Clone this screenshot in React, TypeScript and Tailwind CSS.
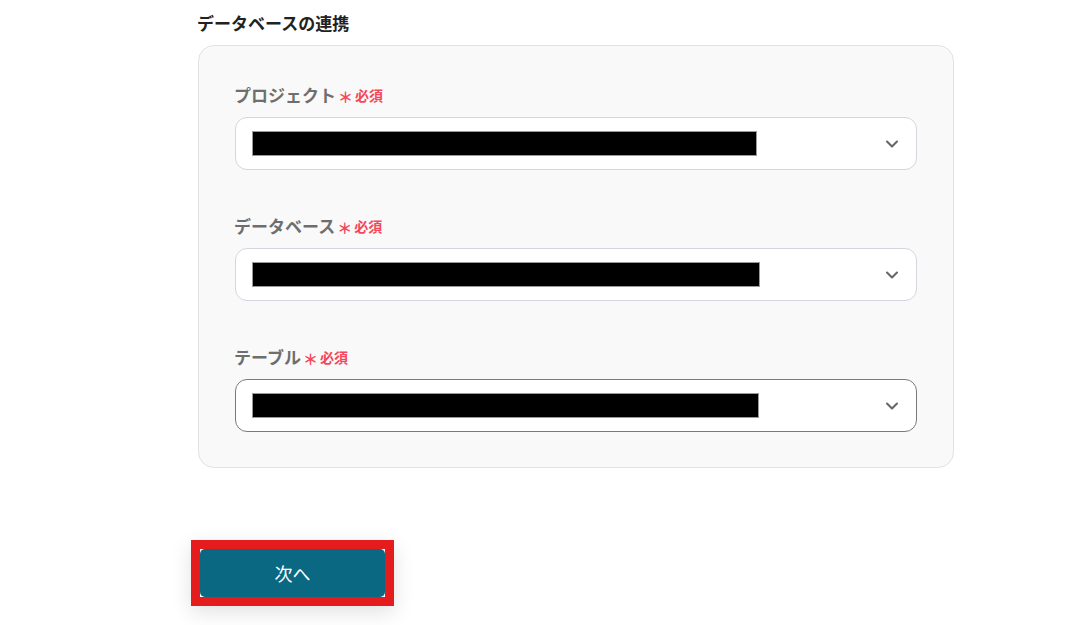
import { ChevronDown } from 'lucide-react';

const fields = [
  { label: 'プロジェクト', barWidth: 'w-[505px]', active: false },
  { label: 'データベース', barWidth: 'w-[508px]', active: false },
  { label: 'テーブル', barWidth: 'w-[507px]', active: true },
];

function SelectField({ label, barWidth, active }: { label: string; barWidth: string; active: boolean }) {
  return (
    <div>
      <div className="flex items-center h-[24px] mb-[10px] ml-[-1px]">
        <span className="text-[17px] font-bold text-[#6e6e6e] leading-[24px]">{label}</span>
        <span className="ml-[2px] mr-[2px] text-[15px] font-bold text-[#f5475a] leading-[24px] mt-[3px]">＊</span>
        <span className="text-[14px] font-bold text-[#f5475a] leading-[24px]">必須</span>
      </div>
      <div
        className={`flex items-center h-[53px] rounded-[12px] bg-white pl-[16px] pr-[14px] border ${
          active ? 'border-[#7a7a7a]' : 'border-[#d3d6dc]'
        }`}
      >
        <div className={`${barWidth} h-[25px] bg-black border border-[#9a9a9a]`} />
        <div className="flex-1" />
        <ChevronDown size={20} strokeWidth={2.5} className="text-[#666666]" />
      </div>
    </div>
  );
}

export default function App() {
  return (
    <div
      className="w-[1090px] h-[625px] bg-white overflow-hidden"
      style={{ fontFamily: '"Noto Sans CJK JP", "Noto Sans", sans-serif' }}
    >
      <div className="ml-[197px] w-[757px] pt-[10px]">
        <h2 className="text-[17px] font-bold text-[#222222] leading-[26px]">データベースの連携</h2>
        <div className="mt-[9px] ml-[1px] rounded-[16px] border border-[#e2e2e2] bg-[#f9f9f9] px-[36px] pt-[37px] pb-[35px] flex flex-col gap-[44px]">
          {fields.map((f) => (
            <SelectField key={f.label} {...f} />
          ))}
        </div>
        <div className="mt-[72px] ml-[-6px] w-[203px] border-[9px] border-[#e41c1e] shadow-[0_6px_20px_rgba(0,0,0,0.12)]">
          <button className="w-full h-[48px] bg-[#0b6882] rounded-[5px] text-white text-[18px] leading-[48px] text-center">
            次へ
          </button>
        </div>
      </div>
    </div>
  );
}
